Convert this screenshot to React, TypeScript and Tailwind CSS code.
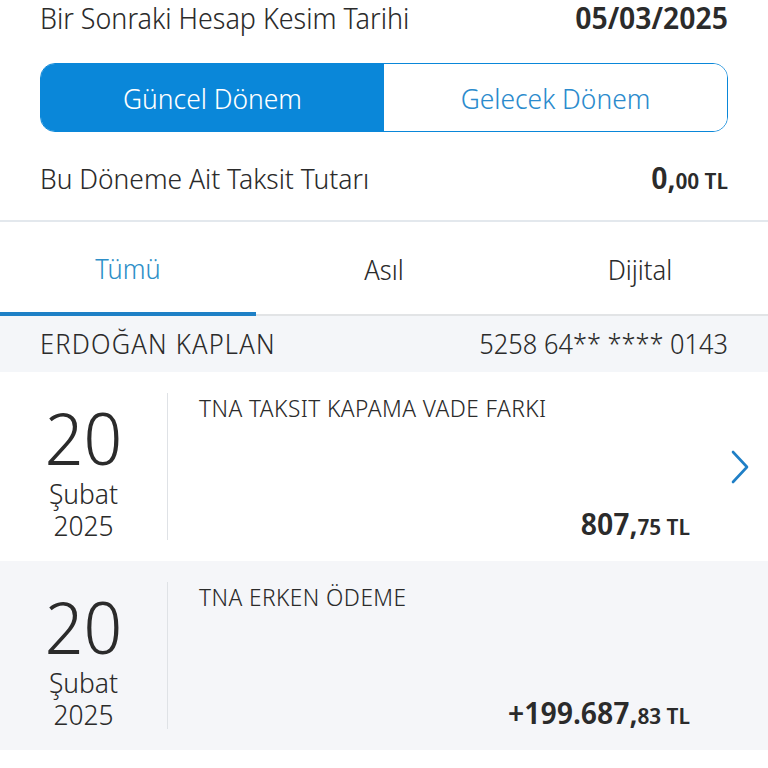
function Chevron() {
  return (
    <svg width="20" height="34" viewBox="0 0 20 34" fill="none">
      <path d="M3 2 L17 17 L3 32" stroke="#1f7fc6" strokeWidth="2.6" strokeLinecap="round" strokeLinejoin="round" />
    </svg>
  );
}

function Amount({ main, dec }: { main: string; dec: string }) {
  return (
    <span className="font-semibold text-[#2b2b2b] whitespace-nowrap leading-none">
      <span className="text-[30px]">{main}</span>
      <span className="text-[22px]">{dec} TL</span>
    </span>
  );
}

function Item({
  title,
  main,
  dec,
  chevron,
  bg,
}: {
  title: string;
  main: string;
  dec: string;
  chevron: boolean;
  bg: string;
}) {
  return (
    <div className={`flex ${bg} py-[21px]`}>
      <div className="w-[167px] flex flex-col items-center pt-[12px] text-[#2b2b2b]">
        <div className="h-[64px] flex items-center text-[72px] leading-none font-light">20</div>
        <div className="h-[32px] mt-[8px] flex items-center text-[28px] leading-none font-light">Şubat</div>
        <div className="h-[31px] flex items-center text-[28px] leading-none font-light">2025</div>
      </div>
      <div className="flex-1 flex border-l border-[#dfe2e6]">
        <div className="flex-1 flex flex-col justify-between pl-[31px]">
          <div className="text-[24px] leading-[30px] font-light tracking-[0.45px] text-[#2b2b2b] whitespace-nowrap">
            {title}
          </div>
          <div className="h-[32px] flex items-center justify-end">
            <Amount main={main} dec={dec} />
          </div>
        </div>
        <div className="w-[78px] flex items-center justify-end pr-[18px]">{chevron ? <Chevron /> : null}</div>
      </div>
    </div>
  );
}

export default function App() {
  return (
    <div
      className="w-[768px] h-[768px] bg-white overflow-hidden text-[#2b2b2b]"
      style={{ fontFamily: '"Noto Sans Display", "Open Sans", sans-serif' }}
    >
      <div className="px-[40px]">
        <div className="h-[36px] flex items-center justify-between">
          <span className="text-[28.5px] leading-none font-light">Bir Sonraki Hesap Kesim Tarihi</span>
          <span className="text-[30px] leading-none font-semibold">05/03/2025</span>
        </div>
        <div className="mt-[27px] h-[69px] flex rounded-[15px] border-[1.5px] border-[#0a87d9] overflow-hidden">
          <div className="w-1/2 bg-[#0a87d9] flex items-center justify-center text-white text-[28px] font-light">
            Güncel Dönem
          </div>
          <div className="w-1/2 bg-white flex items-center justify-center text-[#2b8bcd] text-[28px] font-light">
            Gelecek Dönem
          </div>
        </div>
        <div className="mt-[26px] h-[40px] flex items-center justify-between">
          <span className="text-[28px] font-light">Bu Döneme Ait Taksit Tutarı</span>
          <Amount main="0," dec="00" />
        </div>
      </div>
      <div className="mt-[22px] h-[2px] bg-[#e3e8ed]" />
      <div className="flex h-[94px]">
        <div className="w-1/3 flex flex-col">
          <div className="flex-1 flex items-center justify-center pt-[4px] text-[27px] font-light text-[#2e8fc8]">
            Tümü
          </div>
          <div className="h-[4px] bg-[#1e80c6]" />
        </div>
        <div className="w-1/3 flex flex-col">
          <div className="flex-1 flex items-center justify-center pt-[4px] text-[27px] font-light">Asıl</div>
          <div className="h-[2px] bg-[#e2e4e6]" />
        </div>
        <div className="w-1/3 flex flex-col">
          <div className="flex-1 flex items-center justify-center pt-[4px] text-[27px] font-light">Dijital</div>
          <div className="h-[2px] bg-[#e2e4e6]" />
        </div>
      </div>
      <div className="h-[56px] bg-[#f4f6f9] px-[40px] flex items-center justify-between text-[27px] font-light">
        <span className="tracking-[1.2px]">ERDOĞAN KAPLAN</span>
        <span>5258 64** **** 0143</span>
      </div>
      <Item title="TNA TAKSIT KAPAMA VADE FARKI" main="807," dec="75" chevron bg="bg-white" />
      <Item title="TNA ERKEN ÖDEME" main="+199.687," dec="83" chevron={false} bg="bg-[#f5f6f9]" />
    </div>
  );
}
